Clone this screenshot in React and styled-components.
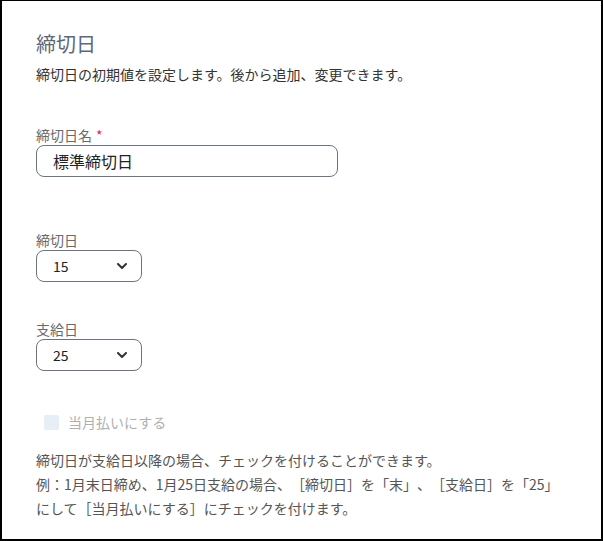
import styled, { createGlobalStyle } from 'styled-components';

const GlobalStyle = createGlobalStyle`
  body {
    margin: 0;
    background: #fff;
    font-family: "Noto Sans CJK JP", "Noto Sans", sans-serif;
    text-spacing-trim: space-all;
  }
`;

const Frame = styled.div`
  box-sizing: border-box;
  width: 603px;
  height: 541px;
  border: 2px solid #000;
  border-top-width: 1px;
  padding: 29px 0 0 34px;
  background: #fff;
`;

const Title = styled.h2`
  margin: 0;
  font-size: 20px;
  line-height: 28px;
  font-weight: 400;
  color: #5d6878;
`;

const Lead = styled.p`
  margin: 6px 0 0;
  font-size: 14px;
  line-height: 20px;
  color: #333;
`;

const Field = styled.div`
  display: flex;
  flex-direction: column;
  align-items: flex-start;
  margin-top: ${(p) => p.$gap}px;
`;

const Label = styled.label`
  font-size: 14px;
  line-height: 20px;
  color: #6a6a6a;
`;

const Required = styled.span`
  color: #e0245e;
  margin-left: 4px;
`;

const TextInput = styled.input`
  box-sizing: border-box;
  width: 302px;
  height: 32px;
  padding: 0 16px;
  border: 1px solid #6b7582;
  border-radius: 8px;
  font-family: inherit;
  font-size: 16px;
  color: #222;
  outline: none;
`;

const SelectBox = styled.div`
  box-sizing: border-box;
  width: 106px;
  height: 32px;
  display: flex;
  align-items: center;
  justify-content: space-between;
  padding: 0 14px 0 16px;
  border: 1px solid #6b7582;
  border-radius: 8px;
  font-size: 14px;
  line-height: 20px;
  color: #222;
`;

const CheckRow = styled.label`
  display: flex;
  align-items: center;
  gap: 9px;
  margin: 41px 0 0 8px;
  font-size: 14px;
  line-height: 20px;
  color: #b0b0b0;
`;

const CheckBox = styled.span`
  width: 15px;
  height: 15px;
  border-radius: 2px;
  background: #e8eef5;
`;

const Note = styled.p`
  margin: 16px 0 0;
  font-size: 14px;
  line-height: 24px;
  color: #555;
`;

function Chevron() {
  return (
    <svg width="10" height="6" viewBox="0 0 10 6" fill="none">
      <path d="M1 1l4 4 4-4" stroke="#333" strokeWidth="2" strokeLinecap="round" strokeLinejoin="round" />
    </svg>
  );
}

function Select({ value }) {
  return (
    <SelectBox>
      <span>{value}</span>
      <Chevron />
    </SelectBox>
  );
}

export default function App() {
  return (
    <>
      <GlobalStyle />
      <Frame>
        <Title>締切日</Title>
        <Lead>締切日の初期値を設定します。後から追加、変更できます。</Lead>

        <Field $gap={41}>
          <Label>
            締切日名<Required>*</Required>
          </Label>
          <TextInput defaultValue="標準締切日" />
        </Field>

        <Field $gap={53}>
          <Label>締切日</Label>
          <Select value="15" />
        </Field>

        <Field $gap={37}>
          <Label>支給日</Label>
          <Select value="25" />
        </Field>

        <CheckRow>
          <CheckBox />
          当月払いにする
        </CheckRow>

        <Note>
          締切日が支給日以降の場合、チェックを付けることができます。
          <br />
          例：1月末日締め、1月25日支給の場合、［締切日］を「末」、［支給日］を「25」
          <br />
          にして［当月払いにする］にチェックを付けます。
        </Note>
      </Frame>
    </>
  );
}
